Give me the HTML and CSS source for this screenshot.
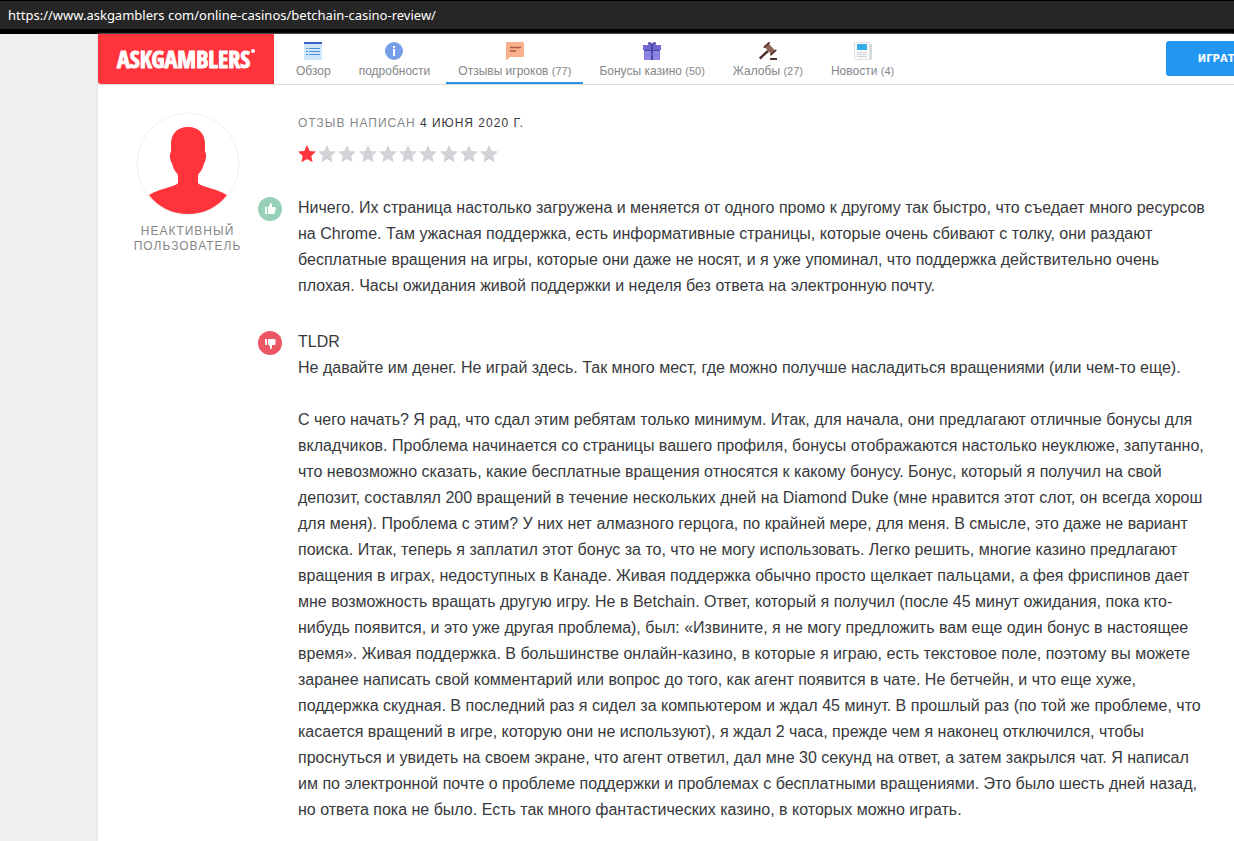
FILE: index.html
```html
<!DOCTYPE html>
<html lang="ru">
<head>
<meta charset="utf-8">
<title>AskGamblers – отзывы игроков</title>
<link rel="stylesheet" href="styles.css">
</head>
<body>
<div class="address">https://www.askgamblers com/online-casinos/betchain-casino-review/</div>
<div class="page">
  <header class="header">
    <a class="logo" href="#">ASKGAMBLERS<span class="logo-dot"></span></a>
    <nav class="tabs">
      <a class="tab" href="#">
        <svg class="icon" viewBox="0 0 18 18"><path fill="#cfe6fb" d="M0 0h18v18H0z"/><path fill="#3f63c4" d="M0 0h18v2H0z"/><path stroke="#4a90d9" d="M2 6.500h2M5 6.500h11M2 9.500h2M5 9.500h11M2 12.500h2M5 12.500h11"/></svg>
        <span>Обзор</span></a>
      <a class="tab" href="#">
        <svg class="icon" viewBox="0 0 18 18"><circle cx="9" cy="9" r="9" fill="#759fe8"/><path fill="#fff" d="M8 4h2v2H8zM8 7h2v7H8z"/></svg>
        <span>подробности</span></a>
      <a class="tab tab-active" href="#">
        <svg class="icon" viewBox="0 0 18 18"><path fill="#f9b08d" d="M1 0h16q1 0 1 1v13q0 1-1 1H4l-3 3H0V1q0-1 1-1z"/><path stroke="#a85a44" stroke-width="1.300" d="M4 5.500h11M4 9h6"/></svg>
        <span>Отзывы игроков <span class="count">(77)</span></span></a>
      <a class="tab" href="#">
        <svg class="icon" viewBox="0 0 18 18"><path fill="#6f68cf" d="M0 3h18v5H0z"/><path fill="#8d86e2" d="M1 8h16v10H1z"/><path fill="#4b45a8" d="M8 3h2v15H8zM1 8h16v1H1z"/><path fill="#7b74d6" d="M1 12h16v1H1z"/><path fill="none" stroke="#5750b8" stroke-width="1.500" d="M9 3C5 3 5 .8 6.500.8S9 3 9 3s1-2.200 2.500-2.200S13 3 9 3z"/></svg>
        <span>Бонусы казино <span class="count">(50)</span></span></a>
      <a class="tab" href="#">
        <svg class="icon" viewBox="0 0 18 18"><path stroke="#4f302b" stroke-width="2.400" d="M.8 16.500L9 9"/><path fill="#8d6356" d="M9.500 1.500l6.500 7-4 3.500-6.500-7z"/><path stroke="#5c3b33" stroke-width="2" stroke-linecap="round" d="M5.500 5L10 1M12 12.500L16.500 8.500"/><path fill="#4f302b" d="M11 16h7v2h-7z"/></svg>
        <span>Жалобы <span class="count">(27)</span></span></a>
      <a class="tab" href="#">
        <svg class="icon" viewBox="0 0 18 18"><path fill="#d5d8dc" d="M2 2h16v14q0 2-2 2H4z"/><path fill="#fafafa" stroke="#dfe1e4" d="M.5.500h15v17H2.500q-2 0-2-2z"/><path fill="#35ade8" d="M3 2h10v6H3z"/><path stroke="#d0d3d6" d="M3 10.500h10M3 12.500h10M3 14.500h10"/></svg>
        <span>Новости <span class="count">(4)</span></span></a>
    </nav>
    <div class="action"><button class="play" type="button">ИГРАТЬ</button></div>
  </header>
  <main class="review">
    <aside class="author">
      <svg class="avatar" viewBox="0 0 104 104"><circle cx="52" cy="52" r="51" fill="#fff" stroke="#f0f0f0"/><path fill="#ff333b" d="M52 15c12 0 17 8 17 17v8c2 1 1 10-1 11-1 6-4 9-6 12v8c3 4 20 6 29 12-9 12-23 19-39 19s-30-7-39-19c9-6 26-8 29-12v-8c-2-3-5-6-6-12-2-1-3-10-1-11v-8c0-9 5-17 17-17z"/></svg>
      <div class="author-name">Неактивный пользователь</div>
    </aside>
    <article class="content">
      <div class="date">Отзыв написан <time class="date-value" datetime="2020-06-04">4 июня 2020 г.</time></div>
      <div class="stars" role="img" aria-label="1 из 10">
        <svg class="star star-on" viewBox="0 0 18 18"><path d="M9 0l2.700 5.900 6.300.700-4.700 4.300L14.600 17.200 9 14l-5.600 3.200 1.300-6.300L0 6.600l6.300-.7z"/></svg>
        <svg class="star" viewBox="0 0 18 18"><path d="M9 0l2.700 5.900 6.300.700-4.700 4.300L14.600 17.200 9 14l-5.600 3.200 1.300-6.300L0 6.600l6.300-.7z"/></svg>
        <svg class="star" viewBox="0 0 18 18"><path d="M9 0l2.700 5.900 6.300.700-4.700 4.300L14.600 17.200 9 14l-5.600 3.200 1.300-6.300L0 6.600l6.300-.7z"/></svg>
        <svg class="star" viewBox="0 0 18 18"><path d="M9 0l2.700 5.900 6.300.700-4.700 4.300L14.600 17.200 9 14l-5.600 3.200 1.300-6.300L0 6.600l6.300-.7z"/></svg>
        <svg class="star" viewBox="0 0 18 18"><path d="M9 0l2.700 5.900 6.300.700-4.700 4.300L14.600 17.200 9 14l-5.600 3.200 1.300-6.300L0 6.600l6.300-.7z"/></svg>
        <svg class="star" viewBox="0 0 18 18"><path d="M9 0l2.700 5.900 6.300.700-4.700 4.300L14.600 17.200 9 14l-5.600 3.200 1.300-6.300L0 6.600l6.300-.7z"/></svg>
        <svg class="star" viewBox="0 0 18 18"><path d="M9 0l2.700 5.900 6.300.700-4.700 4.300L14.600 17.200 9 14l-5.600 3.200 1.300-6.300L0 6.600l6.300-.7z"/></svg>
        <svg class="star" viewBox="0 0 18 18"><path d="M9 0l2.700 5.900 6.300.700-4.700 4.300L14.600 17.200 9 14l-5.600 3.200 1.300-6.300L0 6.600l6.300-.7z"/></svg>
        <svg class="star" viewBox="0 0 18 18"><path d="M9 0l2.700 5.900 6.300.700-4.700 4.300L14.600 17.200 9 14l-5.600 3.200 1.300-6.300L0 6.600l6.300-.7z"/></svg>
        <svg class="star" viewBox="0 0 18 18"><path d="M9 0l2.700 5.900 6.300.700-4.700 4.300L14.600 17.200 9 14l-5.600 3.200 1.300-6.300L0 6.600l6.300-.7z"/></svg>
      </div>
      <section class="opinion">
        <svg class="thumb" viewBox="0 0 24 24"><circle cx="12" cy="12" r="12" fill="#96d0b7"/><path fill="#fff" d="M7 10h2v7H7zM10 17v-7l2-2V6q2-.5 2 1.500V10h3q1 0 .8 1l-1 5q-.3 1-1.300 1z"/></svg>
        <div class="text">
          <p>Ничего. Их страница настолько загружена и меняется от одного промо к другому так быстро, что съедает много ресурсов на Chrome. Там ужасная поддержка, есть информативные страницы, которые очень сбивают с толку, они раздают бесплатные вращения на игры, которые они даже не носят, и я уже упоминал, что поддержка действительно очень плохая. Часы ожидания живой поддержки и неделя без ответа на электронную почту.</p>
        </div>
      </section>
      <section class="opinion">
        <svg class="thumb" viewBox="0 0 24 24"><circle cx="12" cy="12" r="12" fill="#ec5766"/><path fill="#fff" d="M7 8h2v6H7zM10 8h6.500q1 0 1 1v4q0 1-1 1H14v2.500q0 1.500-2 1.500v-3l-2-1.500z"/></svg>
        <div class="text">
          <p>TLDR<br>Не давайте им денег. Не играй здесь. Так много мест, где можно получше насладиться вращениями (или чем-то еще).</p>
          <p>С чего начать? Я рад, что сдал этим ребятам только минимум. Итак, для начала, они предлагают отличные бонусы для вкладчиков. Проблема начинается со страницы вашего профиля, бонусы отображаются настолько неуклюже, запутанно, что невозможно сказать, какие бесплатные вращения относятся к какому бонусу. Бонус, который я получил на свой депозит, составлял 200 вращений в течение нескольких дней на Diamond Duke (мне нравится этот слот, он всегда хорош для меня). Проблема с этим? У них нет алмазного герцога, по крайней мере, для меня. В смысле, это даже не вариант поиска. Итак, теперь я заплатил этот бонус за то, что не могу использовать. Легко решить, многие казино предлагают вращения в играх, недоступных в Канаде. Живая поддержка обычно просто щелкает пальцами, а фея фриспинов дает мне возможность вращать другую игру. Не в Betchain. Ответ, который я получил (после 45 минут ожидания, пока кто-нибудь появится, и это уже другая проблема), был: «Извините, я не могу предложить вам еще один бонус в настоящее время». Живая поддержка. В большинстве онлайн-казино, в которые я играю, есть текстовое поле, поэтому вы можете заранее написать свой комментарий или вопрос до того, как агент появится в чате. Не бетчейн, и что еще хуже, поддержка скудная. В последний раз я сидел за компьютером и ждал 45 минут. В прошлый раз (по той же проблеме, что касается вращений в игре, которую они не используют), я ждал 2 часа, прежде чем я наконец отключился, чтобы проснуться и увидеть на своем экране, что агент ответил, дал мне 30 секунд на ответ, а затем закрылся чат. Я написал им по электронной почте о проблеме поддержки и проблемах с бесплатными вращениями. Это было шесть дней назад, но ответа пока не было. Есть так много фантастических казино, в которых можно играть.</p>
        </div>
      </section>
    </article>
  </main>
</div>
</body>
</html>
```
FILE: styles.css
```css
* { box-sizing: border-box; }
body {
  display: flex;
  flex-direction: column;
  min-height: 100vh;
  margin: 0;
  background: #f0f0f0;
  color: #37393c;
  font-family: "Liberation Sans", Arial, sans-serif;
}
.address {
  height: 34px;
  padding: 0 8px;
  border-top: 1px solid #000;
  border-bottom: 5px solid #000;
  background: #262626;
  color: #fff;
  font: 13px/28px "Noto Sans", sans-serif;
}
.page {
  flex: 1;
  margin-left: 98px;
  background: #fff;
  box-shadow: 0 0 2px #d4d4d4;
}
.header {
  display: flex;
  height: 51px;
  overflow: hidden;
  border-bottom: 1px solid #dedede;
}
.logo {
  display: flex;
  flex: none;
  align-items: center;
  justify-content: center;
  width: 176px;
  padding-bottom: 2px;
  border-bottom-left-radius: 3px;
  background: #ff333b;
  color: #fff;
  font: bold 24px "Liberation Sans Narrow", "Open Sans Condensed", "Liberation Sans", sans-serif;
  text-decoration: none;
  -webkit-text-stroke: 1px #fff;
}
.logo-dot {
  width: 4px;
  height: 4px;
  margin: 0 0 14px 1px;
  border-radius: 50%;
  background: #fff;
}
.tabs {
  display: flex;
  flex: 1;
  gap: 4px;
  padding-left: 10px;
}
.tab {
  display: flex;
  flex-direction: column;
  align-items: center;
  gap: 4px;
  padding: 8px 12px 0;
  border-bottom: 2px solid transparent;
  color: #858789;
  font-size: 12px;
  line-height: 14px;
  text-decoration: none;
  white-space: nowrap;
}
.tab-active { border-bottom-color: #2a8fe2; }
.count { font-size: 11px; }
.icon { width: 18px; height: 18px; }
.action {
  flex: none;
  width: 68px;
  padding-top: 7px;
}
.play {
  width: 108px;
  height: 35px;
  border: 0;
  border-radius: 3px;
  background: #2196f3;
  color: #fff;
  font: bold 10px "DejaVu Sans", sans-serif;
}
.review {
  display: flex;
  gap: 17px;
  padding: 27px 28px 17px 36px;
}
.author {
  display: flex;
  flex: none;
  flex-direction: column;
  align-items: center;
  width: 107px;
}
.avatar { width: 104px; height: 104px; }
.author-name {
  margin-top: 8px;
  color: #858789;
  font-size: 12px;
  line-height: 15px;
  letter-spacing: 1px;
  text-align: center;
  text-transform: uppercase;
}
.content { flex: 1; min-width: 0; }
.date {
  padding: 4px 0 0 40px;
  color: #858789;
  font-size: 12px;
  line-height: 15px;
  letter-spacing: 1px;
  text-transform: uppercase;
}
.date-value { color: #37393c; }
.stars {
  display: flex;
  justify-content: space-between;
  width: 200px;
  margin: 14px 0 0 40px;
}
.star { width: 18px; height: 18px; fill: #d1d3d6; }
.star-on { fill: #ff333b; }
.opinion {
  display: flex;
  gap: 16px;
  margin-top: 30px;
}
.stars + .opinion { margin-top: 32px; }
.thumb { flex: none; width: 24px; height: 24px; margin-top: 2px; }
.text {
  flex: 1;
  min-width: 0;
  font-size: 16px;
  line-height: 26px;
}
.text p { margin: 0 0 26px; }
.opinion .text p:last-child { margin-bottom: 0; }
```
